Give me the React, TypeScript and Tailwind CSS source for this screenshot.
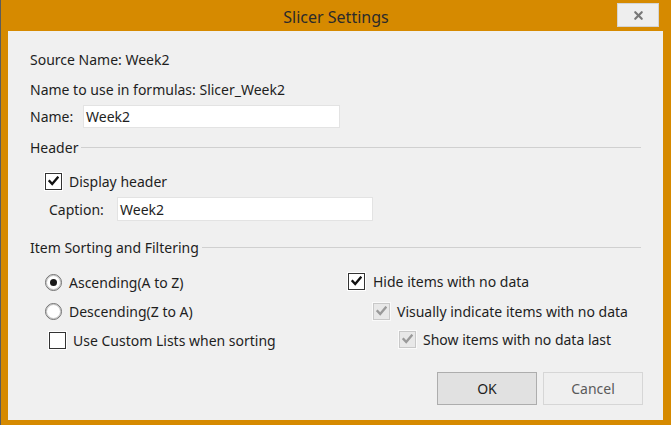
import { X } from "lucide-react";

function CheckMark({ color }: { color: string }) {
  return (
    <svg width="11" height="10" viewBox="0 0 11 10">
      <path d="M1.5 5.2 L4.2 8 L9.6 1.6" fill="none" stroke={color} strokeWidth="2.4" strokeLinecap="square" />
    </svg>
  );
}

function Checkbox({ checked, disabled }: { checked?: boolean; disabled?: boolean }) {
  return (
    <span
      className={`flex h-[17px] w-[17px] shrink-0 items-center justify-center border ${
        disabled ? "border-[#c8c8c8] bg-[#e8e8e8] outline outline-1 outline-[#fafafa]" : "border-[#333333] bg-white outline outline-1 outline-white"
      }`}
    >
      {checked && <CheckMark color={disabled ? "#9a9a9a" : "#111111"} />}
    </span>
  );
}

function Radio({ checked }: { checked?: boolean }) {
  return (
    <span className="flex h-[17px] w-[17px] shrink-0 items-center justify-center rounded-full border border-[#6f6f6f] bg-white shadow-[inset_0_0_0_1px_#c8c8c8]">
      {checked && <span className="h-[7px] w-[7px] rounded-full bg-[#1a1a1a]" />}
    </span>
  );
}

function GroupTitle({ title }: { title: string }) {
  return (
    <div className="flex h-5 items-center pr-[22px]">
      <span>{title}</span>
      <span className="ml-[3px] h-px flex-1 bg-[#d0d0d0]" />
    </div>
  );
}

export default function App() {
  return (
    <div className="flex h-[425px] w-[671px] flex-col border-l border-[#5c5c5c] bg-[#d68a00] font-['Noto_Sans',sans-serif] text-[14px] text-[#1e1e1e]">
      {/* title bar */}
      <div className="relative flex h-[31px] shrink-0 items-center justify-center">
        <span className="pt-[2px] text-[16px] text-[#2b2b2b]">Slicer Settings</span>
        <div className="absolute right-[12px] top-[3px] flex h-[24px] w-[42px] items-center justify-center border border-[#d4d4d4] bg-[#eeeeee]">
          <X className="h-[13px] w-[13px] text-[#777777]" strokeWidth={4} />
        </div>
      </div>

      {/* body */}
      <div className="mb-[5px] ml-[7px] mr-[8px] flex flex-1 flex-col bg-[#f0f0f0] pl-[22px]">
        <div className="mt-[19px] flex h-[29px] items-start leading-5">Source Name: Week2</div>
        <div className="flex h-5 items-center">Name to use in formulas: Slicer_Week2</div>

        <div className="mt-[6px] flex items-center">
          <span className="w-[53px]">Name:</span>
          <div className="flex h-[23px] w-[257px] items-center border border-[#e3e3e3] bg-white pl-[2px]">Week2</div>
        </div>

        <div className="mt-[9px]">
          <GroupTitle title="Header" />
        </div>

        <div className="mt-[14px] flex h-5 items-center pl-[15px]">
          <Checkbox checked />
          <span className="ml-[7px]">Display header</span>
        </div>

        <div className="mt-[6px] flex items-center pl-[19px]">
          <span className="w-[68px]">Caption:</span>
          <div className="flex h-[24px] w-[256px] items-center border border-[#e3e3e3] bg-white pl-[2px]">Week2</div>
        </div>

        <div className="mt-[16px]">
          <GroupTitle title="Item Sorting and Filtering" />
        </div>

        <div className="mt-[15px] flex">
          <div className="flex w-[318px] flex-col gap-[9px] pl-[15px]">
            <div className="flex h-5 items-center">
              <Radio checked />
              <span className="ml-[7px]">Ascending(A to Z)</span>
            </div>
            <div className="flex h-5 items-center">
              <Radio />
              <span className="ml-[7px]">Descending(Z to A)</span>
            </div>
            <div className="flex h-5 items-center pl-[4px]">
              <Checkbox />
              <span className="ml-[7px]">Use Custom Lists when sorting</span>
            </div>
          </div>
          <div className="-mt-[1px] flex flex-col gap-[10px] pl-[0px]">
            <div className="flex h-5 items-center">
              <Checkbox checked />
              <span className="ml-[8px]">Hide items with no data</span>
            </div>
            <div className="flex h-5 items-center pl-[25px]">
              <Checkbox checked disabled />
              <span className="ml-[7px]">Visually indicate items with no data</span>
            </div>
            <div className="-mt-[2px] flex h-5 items-center pl-[51px]">
              <Checkbox checked disabled />
              <span className="ml-[7px]">Show items with no data last</span>
            </div>
          </div>
        </div>

        <div className="mt-[22px] flex justify-end gap-[6px] pr-[20px]">
          <button className="flex h-[33px] w-[100px] items-center justify-center border border-[#adadad] bg-[#e1e1e1] text-[#1e1e1e]">
            OK
          </button>
          <button className="flex h-[33px] w-[100px] items-center justify-center border border-[#d6d6d6] bg-[#efefef] text-[#5a5a5a]">
            Cancel
          </button>
        </div>
      </div>
    </div>
  );
}
